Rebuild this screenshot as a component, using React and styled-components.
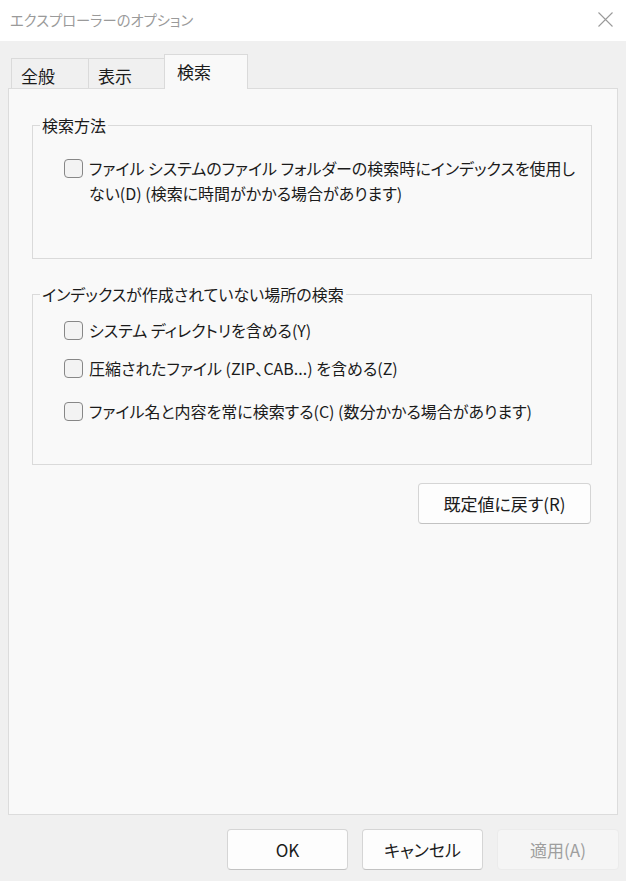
import React from "react";
import styled, { createGlobalStyle } from "styled-components";

const GlobalStyle = createGlobalStyle`
  html, body {
    margin: 0;
    padding: 0;
    background: #f0f0f0;
  }
  body {
    font-family: "Noto Sans CJK JP", "Noto Sans", sans-serif;
    color: #1b1b1b;
  }
`;

const Window = styled.div`
  width: 626px;
  height: 881px;
  background: #f0f0f0;
  display: flex;
  flex-direction: column;
  overflow: hidden;
  box-sizing: border-box;
`;

const TitleBar = styled.div`
  height: 41px;
  flex: none;
  background: #ffffff;
  display: flex;
  align-items: center;
  justify-content: space-between;
  padding: 0 13px 3px 10px;
  box-sizing: border-box;
`;

const Title = styled.div`
  font-size: 14.3px;
  color: #9a9a9a;
  font-feature-settings: "palt";
`;

const CloseIcon = () => (
  <svg width="15" height="15" viewBox="0 0 15 15">
    <path d="M0.5 0.5 L14.5 14.5 M14.5 0.5 L0.5 14.5" stroke="#9a9a9a" strokeWidth="1.1" fill="none" />
  </svg>
);

const Content = styled.div`
  flex: 1;
  display: flex;
  flex-direction: column;
  padding: 0 8px;
  min-height: 0;
`;

const TabStrip = styled.div`
  display: flex;
  align-items: flex-end;
  margin: 13px 0 -1px 3px;
  position: relative;
  z-index: 1;
`;

const Tab = styled.div`
  box-sizing: border-box;
  width: ${(p) => p.$w}px;
  height: ${(p) => (p.$active ? 35 : 30)}px;
  margin-bottom: ${(p) => (p.$active ? 0 : 1)}px;
  margin-left: ${(p) => (p.$first ? 0 : -1)}px;
  padding: ${(p) => (p.$active ? "0 0 2px 12px" : "3px 0 0 9px")};
  background: ${(p) => (p.$active ? "#f9f9f9" : "#f0f0f0")};
  border: 1px solid #dadada;
  border-bottom: none;
  display: flex;
  align-items: center;
  font-size: 17px;
  color: #1b1b1b;
`;

const Panel = styled.div`
  flex: 1;
  background: #f9f9f9;
  border: 1px solid #dcdcdc;
  padding: 24px 25px 0 23px;
  display: flex;
  flex-direction: column;
`;

const Group = styled.fieldset`
  margin: ${(p) => p.$top || 0}px 0 0 0;
  padding: 0;
  border: 1px solid #dadada;
  min-width: 0;
`;

const Legend = styled.legend`
  margin-left: 7px;
  padding: 0 2px;
  font-size: 16px;
  line-height: 24px;
  font-feature-settings: "palt";
  color: #1b1b1b;
`;

const GroupBody = styled.div`
  padding: ${(p) => p.$pt}px 0 ${(p) => p.$pb}px 31px;
  display: flex;
  flex-direction: column;
`;

const CheckRow = styled.label`
  display: flex;
  align-items: flex-start;
  gap: 6px;
  margin-top: ${(p) => p.$mt || 0}px;
`;

const Box = styled.span`
  flex: none;
  width: 19px;
  height: 19px;
  margin-top: 3px;
  box-sizing: border-box;
  border: 1px solid #878787;
  border-radius: 4px;
  background: #f3f3f3;
`;

const LabelText = styled.span`
  font-size: 16px;
  line-height: 25px;
  white-space: nowrap;
  font-feature-settings: "palt";
  color: #1b1b1b;
`;

const Button = styled.button`
  box-sizing: border-box;
  width: ${(p) => p.$w || 121}px;
  height: 41px;
  border-radius: 4px;
  border: 1px solid ${(p) => (p.disabled ? "#ebebeb" : "#d5d5d5")};
  border-bottom-color: ${(p) => (p.disabled ? "#ebebeb" : "#c2c2c2")};
  background: ${(p) => (p.disabled ? "#f5f5f5" : "#fdfdfd")};
  color: ${(p) => (p.disabled ? "#9e9e9e" : "#1b1b1b")};
  font-family: "Noto Sans CJK JP", "Noto Sans", sans-serif;
  font-size: 17px;
  font-feature-settings: "palt";
  padding: 0;
`;

const ResetButton = styled(Button)`
  align-self: flex-end;
  margin: 18px 1px 0 0;
`;

const Footer = styled.div`
  flex: none;
  display: flex;
  justify-content: flex-end;
  gap: 14px;
  padding: 14px 7px 11px 0;
`;

const Check = ({ children, mt }) => (
  <CheckRow $mt={mt}>
    <Box />
    <LabelText>{children}</LabelText>
  </CheckRow>
);

export default function App() {
  return (
    <Window>
      <GlobalStyle />
      <TitleBar>
        <Title>エクスプローラーのオプション</Title>
        <CloseIcon />
      </TitleBar>
      <Content>
        <TabStrip>
          <Tab $first $w={78}>全般</Tab>
          <Tab $w={77}>表示</Tab>
          <Tab $active $w={84}>検索</Tab>
        </TabStrip>
        <Panel>
          <Group>
            <Legend>検索方法</Legend>
            <GroupBody $pt={19} $pb={52}>
              <Check>
                ファイル システムのファイル フォルダーの検索時にインデックスを使用し
                <br />
                ない(D) (検索に時間がかかる場合があります)
              </Check>
            </GroupBody>
          </Group>
          <Group $top={23}>
            <Legend>インデックスが作成されていない場所の検索</Legend>
            <GroupBody $pt={12} $pb={40}>
              <Check>システム ディレクトリを含める(Y)</Check>
              <Check mt={13}>圧縮されたファイル (ZIP、CAB...) を含める(Z)</Check>
              <Check mt={18}>ファイル名と内容を常に検索する(C) (数分かかる場合があります)</Check>
            </GroupBody>
          </Group>
          <ResetButton $w={173}>既定値に戻す(R)</ResetButton>
        </Panel>
      </Content>
      <Footer>
        <Button>OK</Button>
        <Button>キャンセル</Button>
        <Button disabled $w={122}>適用(A)</Button>
      </Footer>
    </Window>
  );
}
